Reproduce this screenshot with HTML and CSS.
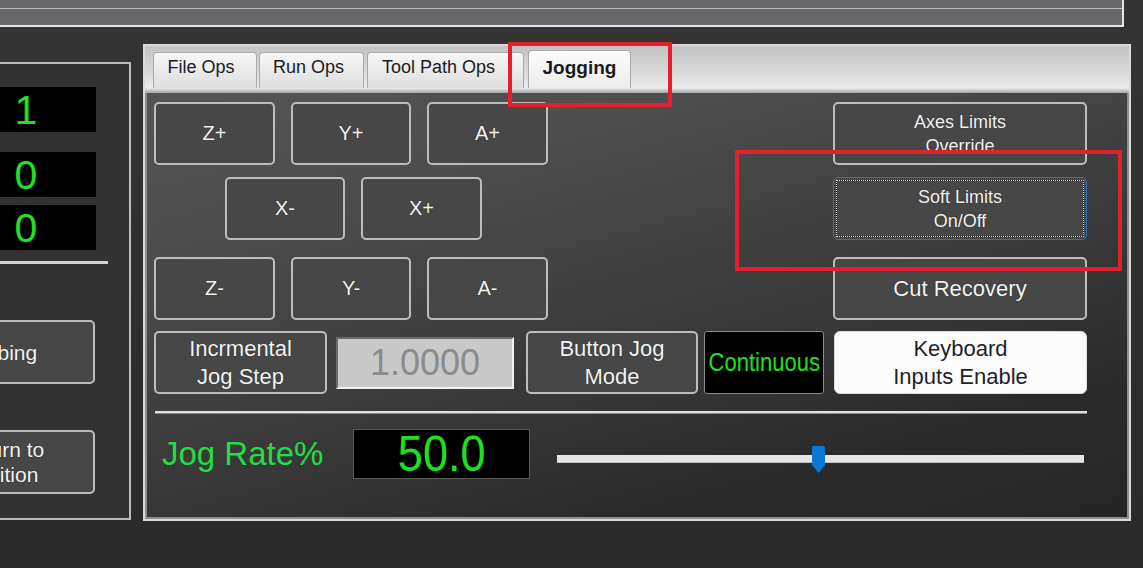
FILE: index.html
```html
<!DOCTYPE html>
<html>
<head>
<meta charset="utf-8">
<title>Jogging</title>
<link rel="stylesheet" href="styles.css">
</head>
<body>
<div class="topbar"><div class="topbar-line"></div></div>
<div class="workspace">
  <aside class="side">
    <div class="dro dro-1">1</div>
    <div class="dro dro-2">0</div>
    <div class="dro dro-3">0</div>
    <div class="side-rule"></div>
    <div class="btn side-btn side-probe">Probing</div>
    <div class="btn side-btn side-return">Return to<br>Position</div>
  </aside>
  <section class="panel">
    <div class="tabbar">
      <div class="tab tab-file">File Ops</div>
      <div class="tab tab-run">Run Ops</div>
      <div class="tab tab-path">Tool Path Ops</div>
      <div class="tab tab-jog active">Jogging</div>
    </div>
    <div class="tab-under"></div>
    <div class="content">
      <div class="upper">
        <div class="pad">
          <div class="pad-row">
            <div class="btn jog w121">Z+</div>
            <div class="btn jog w120">Y+</div>
            <div class="btn jog w121">A+</div>
          </div>
          <div class="pad-row pad-mid">
            <div class="btn jog w120">X-</div>
            <div class="btn jog w121">X+</div>
          </div>
          <div class="pad-row pad-low">
            <div class="btn jog w121">Z-</div>
            <div class="btn jog w120">Y-</div>
            <div class="btn jog w121">A-</div>
          </div>
        </div>
        <div class="limits">
          <div class="btn small">Axes Limits<br>Override</div>
          <div class="btn small focus pad-mid">Soft Limits<br>On/Off</div>
          <div class="btn big pad-low">Cut Recovery</div>
        </div>
      </div>
      <div class="mode-row">
        <div class="btn mode w173">Incrmental<br>Jog Step</div>
        <div class="step-input">1.0000</div>
        <div class="btn mode w172 gap12">Button Jog<br>Mode</div>
        <div class="cont"><span class="narrow">Continuous</span></div>
        <div class="kbd">Keyboard<br>Inputs Enable</div>
      </div>
      <div class="rule"></div>
      <div class="rate-row">
        <div class="rate-label">Jog Rate%</div>
        <div class="rate-box"><span class="narrow-big">50.0</span></div>
        <div class="slider">
          <div class="track"></div>
          <svg class="thumb" width="13" height="27" viewBox="0 0 13 27"><path d="M0 1.5 Q0 0 1.5 0 H11.5 Q13 0 13 1.5 V19 L6.5 27 L0 19 Z" fill="#0b78d6"/></svg>
        </div>
      </div>
    </div>
  </section>
</div>
<div class="mark mark-tab"></div>
<div class="mark mark-soft"></div>
</body>
</html>
```
FILE: styles.css
```css
html, body {
  margin: 0;
  padding: 0;
}
body {
  width: 1143px;
  height: 568px;
  overflow: hidden;
  background: linear-gradient(#343434, #2a2a2a);
  font-family: "Liberation Sans", Arial, sans-serif;
  position: relative;
}
.topbar {
  width: 1122px;
  height: 25px;
  background: #69676c;
  border-right: 2px solid #e6e6e6;
  border-bottom: 2px solid #e6e6e6;
}
.topbar-line {
  height: 8px;
  border-bottom: 1px solid #bdbcc0;
}
.workspace {
  display: flex;
  align-items: flex-start;
  margin-top: 17px;
}
.side {
  width: 129px;
  height: 454px;
  margin-top: 18px;
  background: #323232;
  border-top: 2px solid #bcbcbc;
  border-right: 2px solid #bcbcbc;
  border-bottom: 2px solid #bcbcbc;
  overflow: hidden;
  display: flex;
  flex-direction: column;
  flex-shrink: 0;
}
.dro {
  width: 140px;
  height: 45px;
  margin-left: -44px;
  background: #000;
  color: #22e024;
  font-size: 41px;
  line-height: 46px;
  text-align: center;
  flex-shrink: 0;
}
.dro-1 { margin-top: 23px; }
.dro-2 { margin-top: 20px; }
.dro-3 { margin-top: 8px; }
.side-rule {
  width: 108px;
  height: 3px;
  margin-top: 11px;
  background: #d2d2d2;
  flex-shrink: 0;
}
.btn {
  box-sizing: border-box;
  background: #474747;
  border: 2px solid #bdbdbd;
  border-radius: 5px;
  color: #f4f4f4;
  display: flex;
  align-items: center;
  justify-content: center;
  text-align: center;
  flex-shrink: 0;
  text-shadow: 0 0 1px rgba(0, 0, 0, 0.7);
}
.side-btn {
  width: 188px;
  height: 64px;
  margin-left: -93px;
  font-size: 21px;
  line-height: 25px;
}
.side-probe { margin-top: 56px; }
.side-return { margin-top: 46px; }

.panel {
  box-sizing: border-box;
  width: 988px;
  height: 477px;
  margin-left: 12px;
  border: 2px solid #dadada;
  background: #8f8f8f;
  display: flex;
  flex-direction: column;
  flex-shrink: 0;
}
.tabbar {
  height: 42px;
  background: linear-gradient(#c3c3c3, #dcdcdc 70%, #ececec);
  display: flex;
  align-items: flex-end;
  padding-left: 8px;
  flex-shrink: 0;
}
.tab {
  box-sizing: border-box;
  height: 36px;
  border: 1px solid #a9a9a9;
  border-bottom: none;
  border-radius: 4px 4px 0 0;
  background: linear-gradient(#f6f6f6, #dedede);
  color: #1b1b22;
  font-size: 18px;
  display: flex;
  justify-content: center;
  align-items: center;
  padding-bottom: 6px;
}
.tab-file { width: 104px; padding-right: 8px; }
.tab-run { width: 105px; margin-left: 2px; padding-right: 6px; }
.tab-path { width: 157px; margin-left: 3px; padding-right: 14px; }
.tab-jog { width: 103px; margin-left: 4px; }
.tab.active {
  height: 38px;
  font-weight: bold;
  font-size: 19px;
  background: linear-gradient(#fbfbfb, #ececec);
  padding-bottom: 4px;
}
.tab-under {
  height: 5px;
  background: linear-gradient(#ececec, #a3a3a3);
  flex-shrink: 0;
}
.content {
  flex: 1;
  margin: 0 2px 2px 2px;
  padding: 9px 40px 0 7px;
  background: linear-gradient(165deg, #555 0%, #4c4c4c 25%, #3a3a3a 55%, #2b2b2b 80%, #252525 100%);
  display: flex;
  flex-direction: column;
}
.upper {
  display: flex;
  justify-content: space-between;
}
.pad {
  display: flex;
  flex-direction: column;
}
.pad-row {
  display: flex;
  gap: 16px;
}
.pad-mid { margin-top: 12px; }
.pad-row.pad-mid { margin-left: 71px; }
.pad-low { margin-top: 17px; }
.jog {
  height: 63px;
  font-size: 20px;
}
.w120 { width: 120px; }
.w121 { width: 121px; }
.w172 { width: 172px; }
.w173 { width: 173px; }
.limits {
  display: flex;
  flex-direction: column;
  width: 254px;
}
.limits .btn {
  height: 63px;
  width: 254px;
}
.small {
  font-size: 18px;
  line-height: 24px;
}
.big {
  font-size: 22px;
}
.focus {
  border: 1px solid #2a73c0;
  position: relative;
}
.focus::before {
  content: "";
  position: absolute;
  inset: 2px;
  border: 1px solid #111;
}
.focus::after {
  content: "";
  position: absolute;
  inset: 2px;
  border: 1px dotted #e4e4e4;
}
.mode-row {
  display: flex;
  align-items: center;
  margin-top: 11px;
  height: 63px;
}
.mode {
  height: 63px;
  font-size: 22px;
  line-height: 28px;
}
.step-input {
  box-sizing: border-box;
  width: 178px;
  height: 52px;
  margin-left: 9px;
  background: #c8c8c8;
  border: 2px solid;
  border-color: #6a6a6a #f2f2f2 #f2f2f2 #6a6a6a;
  color: #8b8b8b;
  font-size: 36px;
  display: flex;
  align-items: center;
  justify-content: center;
}
.gap12 { margin-left: 12px; }
.cont {
  box-sizing: border-box;
  width: 120px;
  height: 63px;
  margin-left: 6px;
  background: #000;
  border: 1px solid #8a8a8a;
  border-radius: 3px;
  display: flex;
  align-items: center;
  justify-content: center;
}
.narrow {
  display: inline-block;
  color: #1fe01f;
  font-size: 25px;
  transform: scaleX(0.88);
  white-space: nowrap;
}
.kbd {
  box-sizing: border-box;
  width: 253px;
  height: 63px;
  margin-left: 10px;
  background: #fcfcfc;
  border: 1px solid #dcdcdc;
  border-radius: 6px;
  color: #1f1f2b;
  font-size: 22px;
  line-height: 28px;
  text-align: center;
  display: flex;
  align-items: center;
  justify-content: center;
}
.rule {
  width: 932px;
  height: 2px;
  margin-top: 17px;
  margin-left: 1px;
  background: #e0e0e0;
  box-shadow: 0 1px 0 #8a8a8a;
}
.rate-row {
  display: flex;
  align-items: center;
  margin-top: 16px;
  height: 50px;
}
.rate-label {
  width: 199px;
  padding-left: 8px;
  box-sizing: border-box;
  color: #22dd44;
  font-size: 33px;
  white-space: nowrap;
}
.rate-box {
  box-sizing: border-box;
  width: 177px;
  height: 50px;
  background: #000;
  border: 1px solid #5a5a5a;
  display: flex;
  align-items: center;
  justify-content: center;
}
.narrow-big {
  display: inline-block;
  color: #1fe01f;
  font-size: 50px;
  line-height: 50px;
  transform: scaleX(0.9);
}
.slider {
  position: relative;
  width: 527px;
  height: 27px;
  margin-left: 27px;
  margin-top: 10px;
  display: flex;
  align-items: center;
}
.track {
  width: 100%;
  height: 7px;
  background: #e6e6e6;
  border-bottom: 1px solid #bdbdbd;
}
.thumb {
  position: absolute;
  left: 255px;
  top: 0;
}
.mark {
  position: absolute;
  box-sizing: border-box;
  border: 4px solid #e3202b;
}
.mark-tab {
  left: 508px;
  top: 42px;
  width: 164px;
  height: 65px;
}
.mark-soft {
  left: 735px;
  top: 150px;
  width: 387px;
  height: 121px;
}
```
